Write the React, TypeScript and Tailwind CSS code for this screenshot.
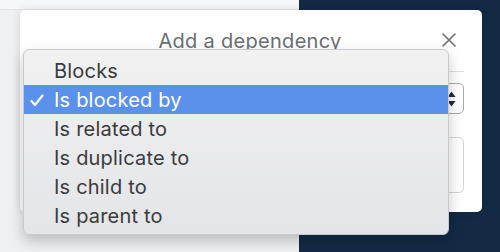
const items = ["Blocks", "Is blocked by", "Is related to", "Is duplicate to", "Is child to", "Is parent to"];

export default function App() {
  return (
    <div className="relative flex w-[500px] h-[252px] overflow-hidden" style={{ fontFamily: "Inter, 'Liberation Sans', sans-serif" }}>
      {/* page behind the modal */}
      <div className="w-[299px] flex flex-col bg-[#eef0f2]">
        <div className="h-[10px] bg-[#f6f7f8] border-b border-[#e2e4e7]" />
      </div>
      <div className="flex-1 bg-[#132a45]" />

      {/* modal */}
      <div className="absolute left-[20px] top-[10px] w-[462px] h-[202px] bg-white rounded-[5px] shadow-[0_0_10px_rgba(0,0,0,0.12)] flex flex-col">
        <div className="relative h-[62px] mx-[16px] mr-[18px] border-b border-[#dedfe1] flex items-center justify-center">
          <span className="text-[20px] tracking-[0.3px] text-[#6b6e73] leading-none">Add a dependency</span>
          <svg className="absolute right-[8px] top-[23px]" width="14" height="14" viewBox="0 0 14 14">
            <path d="M1 1L13 13M13 1L1 13" stroke="#6b6e73" strokeWidth="1.6" strokeLinecap="round" />
          </svg>
        </div>
        <div className="flex flex-col mx-[16px] mr-[18px] mt-[11px] gap-[23px]">
          <div className="h-[31px] border border-[#a9abae] rounded-[5px] flex items-center justify-end pr-[7px]">
            <svg width="9" height="18" viewBox="0 0 9 18">
              <path d="M0.5 7L4.5 1.5L8.5 7Z" fill="#1d2c44" />
              <path d="M0.5 11L4.5 16.5L8.5 11Z" fill="#1d2c44" />
            </svg>
          </div>
          <div className="h-[56px] border border-[#d4d5d8] rounded-[5px]" />
        </div>
      </div>

      {/* native select menu */}
      <div className="absolute left-[23px] top-[49px] w-[426px] h-[186px] rounded-[6px] border border-[#c9cacd] bg-gradient-to-b from-[#f1f1f1] to-[#e4e5e8] shadow-[0_6px_14px_rgba(0,0,0,0.22)] py-[6px]">
        {items.map((label) => {
          const active = label === "Is blocked by";
          return (
            <div
              key={label}
              className={
                active
                  ? "relative h-[29px] flex items-center pl-[30px] bg-[#5a91ea] text-white text-[20px] tracking-[0.2px]"
                  : "relative h-[29px] flex items-center pl-[30px] text-[#3a3b3d] text-[20px] tracking-[0.2px]"
              }
            >
              {active && (
                <svg className="absolute left-[6px] top-[9px]" width="14" height="13" viewBox="0 0 14 13">
                  <path d="M1.5 7L5 11L12.5 1.5" stroke="white" strokeWidth="2.2" fill="none" strokeLinecap="round" strokeLinejoin="round" />
                </svg>
              )}
              {label}
            </div>
          );
        })}
      </div>
    </div>
  );
}
